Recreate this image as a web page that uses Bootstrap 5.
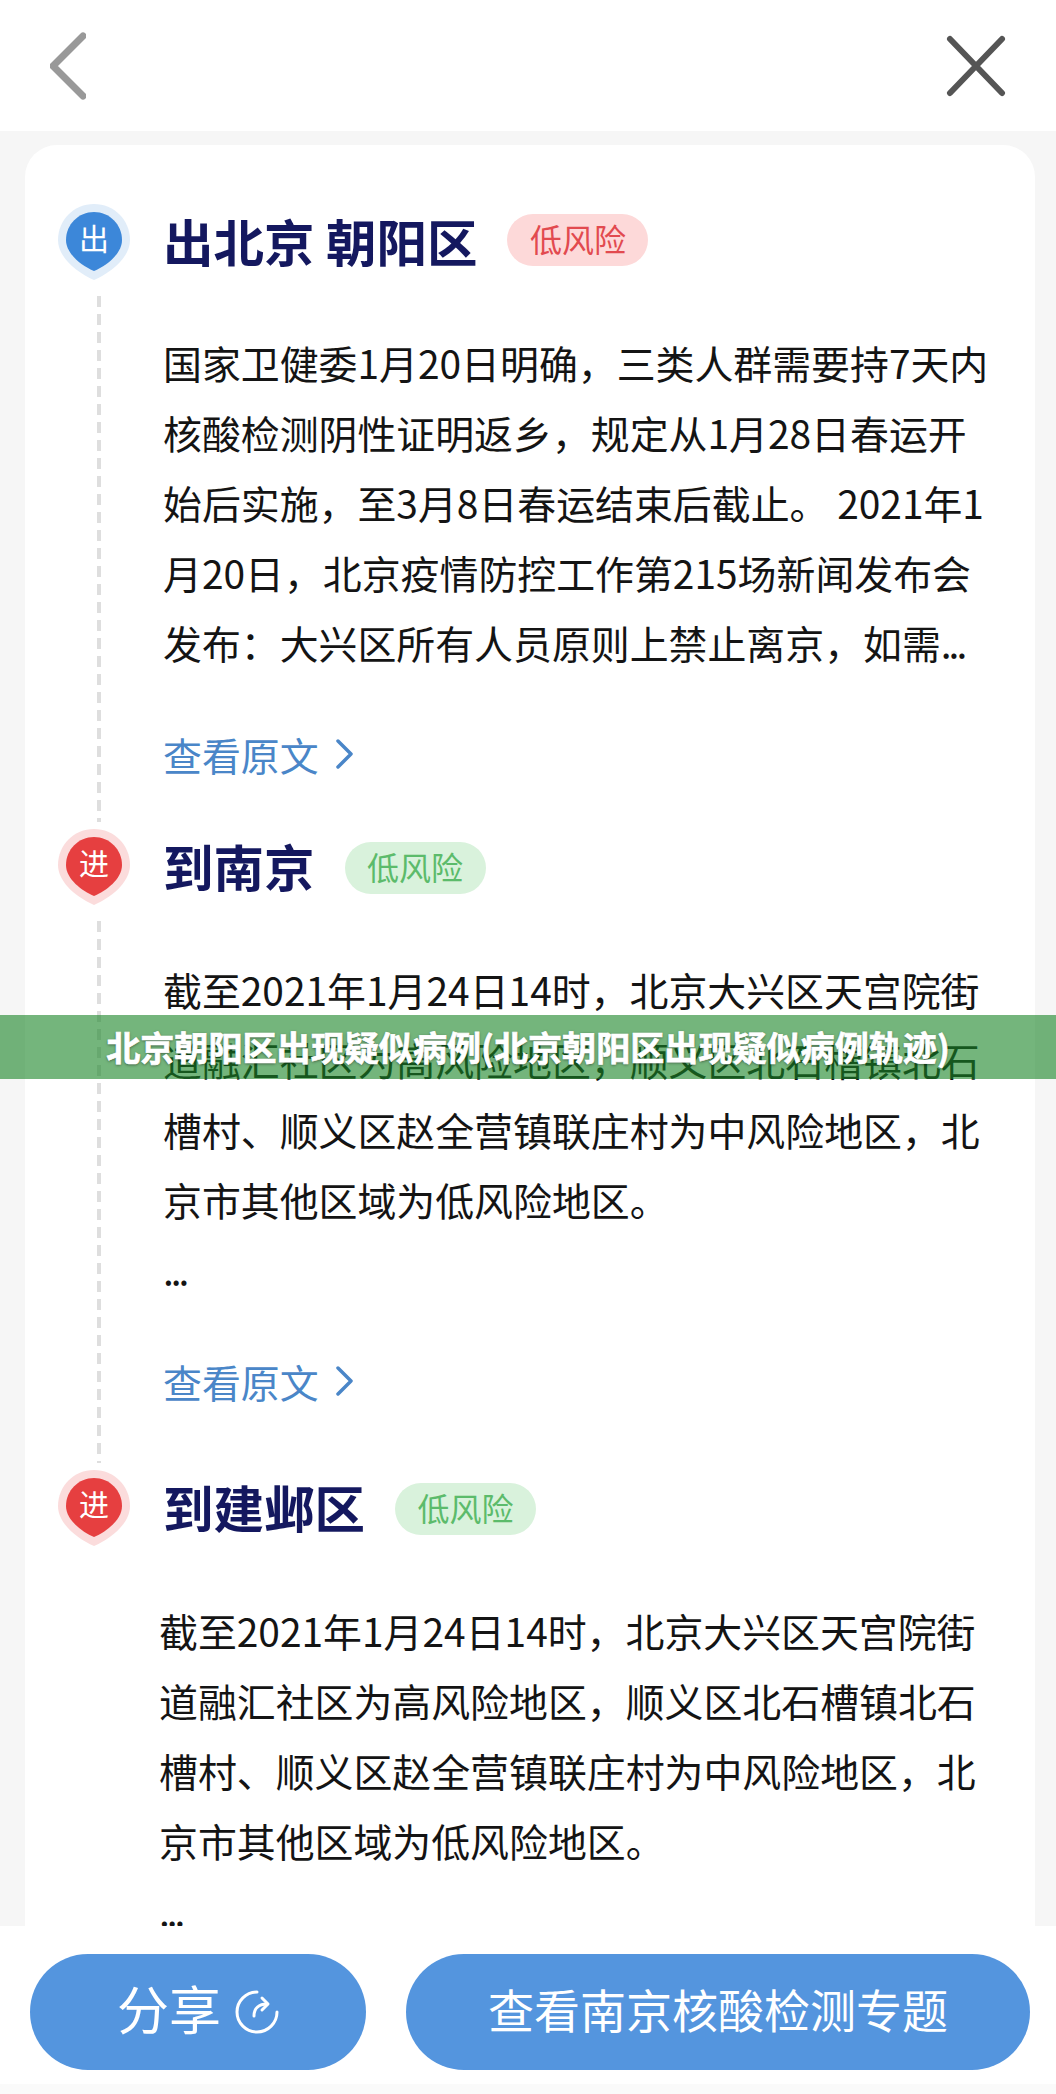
<!DOCTYPE html>
<html lang="zh-CN">
<head>
<meta charset="utf-8">
<title>北京朝阳区出现疑似病例</title>
<link href="https://cdn.jsdelivr.net/npm/bootstrap@5.3.0/dist/css/bootstrap.min.css" rel="stylesheet">
<style>
html,body{margin:0;background:#f6f6f6}
.app-shell{width:1056px;height:2094px;overflow:hidden;background:#f6f6f6;font-family:"Noto Sans CJK SC","Liberation Sans",sans-serif;color:#141414}
.top-bar{height:131px;flex:none;padding:0 50px 0 50px}
.main-area{flex:1 1 0;min-height:0;overflow:hidden;padding:14px 21px 0 25px}
.sheet{background:#fff;border-radius:32px 32px 0 0;padding:63px 33px 0 33px;height:100%}
.stop{display:flex}
.stop-one{height:625px}
.stop-two{height:641px}
.rail{width:72px;flex:none;margin-right:33px;display:flex;flex-direction:column}
.pin{display:block;width:72px;height:76px;margin-top:-4px;flex:none}
.pin text{font-size:30px;fill:#fff;text-anchor:middle;font-family:"Noto Sans CJK SC",sans-serif}
.dash{width:4px;flex:1 1 0;margin:16px 0 11px 39px;background:repeating-linear-gradient(to bottom,#dedede 0,#dedede 11px,transparent 11px,transparent 18px)}
.stop-text{min-width:0;white-space:nowrap;margin-top:-3px}
.head-row{height:70px;display:flex;align-items:center}
.place{font-size:50.500px;font-weight:700;line-height:70px;color:#14185f;margin:0}
.risk{height:52px;width:141px;border-radius:26px;font-size:32px;line-height:49px;text-align:center;margin-left:30px}
.risk-red{background:#fdd9d9;color:#e24a4f}
.risk-green{background:#d9f2dc;color:#5cbb6b;margin-top:6px}
.copy{font-size:38.900px;line-height:70px;margin:52px 0 0;color:#141414}
.copy-b{margin-top:54px}
.shift-text{margin-left:-4px}
.dots{letter-spacing:-3px}
.more{display:flex;align-items:center;gap:16px;font-size:38.900px;line-height:70px;color:#4a86c8;margin-top:42px;text-decoration:none}
.more svg{flex:none}
.notice{position:absolute;left:0;right:0;top:1015px;height:64px;background:rgba(23,132,37,.6);color:#fff;font-family:"Noto Sans CJK SC",sans-serif;font-weight:700;font-size:34.100px;line-height:62px;text-align:center;text-shadow:0 1px 3px rgba(0,0,0,.5);-webkit-text-stroke:.7px #fff;white-space:nowrap}
.bottom-bar{flex:none;height:168px;background:linear-gradient(to bottom,#fff 158px,#fafafa 158px);padding:28px 26px 0 30px;gap:40px}
.action{height:116px;border:0;border-radius:58px;background:#5495de;color:#fff;font-family:"Noto Sans CJK SC",sans-serif;display:flex;align-items:center;justify-content:center;padding:0 0 8px}
.action-share{width:336px;font-size:52px;gap:14px}
.action-share svg{margin-top:8px}
.action-topic{width:624px;font-size:46px}
</style>
</head>
<body>
<div class="app-shell position-relative d-flex flex-column">
  <header class="top-bar bg-white d-flex justify-content-between align-items-center">
    <svg width="36" height="68" viewBox="0 0 36 68" fill="none" stroke="#999" stroke-width="7" stroke-linecap="round" stroke-linejoin="round"><path d="M33 4 3 34l30 30"/></svg>
    <svg width="60" height="62" viewBox="0 0 60 62" fill="none" stroke="#555" stroke-width="6" stroke-linecap="round"><path d="M4 4l52 54M56 4 4 58"/></svg>
  </header>
  <main class="main-area">
    <div class="sheet">
      <section class="stop stop-one">
        <div class="rail">
          <svg class="pin" viewBox="0 0 72 76"><path fill="#e1edf9" d="M36 0C56 0 72 16 72 36C72 54 52 69 36 76C20 69 0 54 0 36C0 16 16 0 36 0Z"/><path fill="#3c87d9" d="M36 8C51.500 8 64 20.500 64 36C64 50 48 62 36 67C24 62 8 50 8 36C8 20.500 20.500 8 36 8Z"/><text x="36" y="46">出</text></svg>
          <div class="dash"></div>
        </div>
        <div class="stop-text">
          <div class="head-row"><h2 class="place">出北京 朝阳区</h2><span class="risk risk-red">低风险</span></div>
          <p class="copy">国家卫健委1月20日明确，三类人群需要持7天内<br>核酸检测阴性证明返乡，规定从1月28日春运开<br>始后实施，至3月8日春运结束后截止。 2021年1<br>月20日，北京疫情防控工作第215场新闻发布会<br>发布：大兴区所有人员原则上禁止离京，如需<span class="dots">...</span></p>
          <a class="more" href="#">查看原文<svg width="18" height="30" viewBox="0 0 18 30" fill="none" stroke="#4a86c8" stroke-width="3.500" stroke-linecap="round" stroke-linejoin="round"><path d="M3 2l13 13L3 28"/></svg></a>
        </div>
      </section>
      <section class="stop stop-two">
        <div class="rail">
          <svg class="pin" viewBox="0 0 72 76"><path fill="#fbdcdc" d="M36 0C56 0 72 16 72 36C72 54 52 69 36 76C20 69 0 54 0 36C0 16 16 0 36 0Z"/><path fill="#e63f40" d="M36 8C51.500 8 64 20.500 64 36C64 50 48 62 36 67C24 62 8 50 8 36C8 20.500 20.500 8 36 8Z"/><text x="36" y="46">进</text></svg>
          <div class="dash"></div>
        </div>
        <div class="stop-text">
          <div class="head-row"><h2 class="place">到南京</h2><span class="risk risk-green">低风险</span></div>
          <p class="copy copy-b">截至2021年1月24日14时，北京大兴区天宫院街<br>道融汇社区为高风险地区，顺义区北石槽镇北石<br>槽村、顺义区赵全营镇联庄村为中风险地区，北<br>京市其他区域为低风险地区。<br><span class="dots">...</span></p>
          <a class="more" href="#">查看原文<svg width="18" height="30" viewBox="0 0 18 30" fill="none" stroke="#4a86c8" stroke-width="3.500" stroke-linecap="round" stroke-linejoin="round"><path d="M3 2l13 13L3 28"/></svg></a>
        </div>
      </section>
      <section class="stop">
        <div class="rail">
          <svg class="pin" viewBox="0 0 72 76"><path fill="#fbdcdc" d="M36 0C56 0 72 16 72 36C72 54 52 69 36 76C20 69 0 54 0 36C0 16 16 0 36 0Z"/><path fill="#e63f40" d="M36 8C51.500 8 64 20.500 64 36C64 50 48 62 36 67C24 62 8 50 8 36C8 20.500 20.500 8 36 8Z"/><text x="36" y="46">进</text></svg>
        </div>
        <div class="stop-text">
          <div class="head-row"><h2 class="place">到建邺区</h2><span class="risk risk-green">低风险</span></div>
          <p class="copy copy-b shift-text">截至2021年1月24日14时，北京大兴区天宫院街<br>道融汇社区为高风险地区，顺义区北石槽镇北石<br>槽村、顺义区赵全营镇联庄村为中风险地区，北<br>京市其他区域为低风险地区。<br><span class="dots">...</span></p>
        </div>
      </section>
    </div>
  </main>
  <footer class="bottom-bar d-flex">
    <button type="button" class="btn action action-share">分享<svg width="44" height="44" viewBox="0 0 44 44" fill="none" stroke="#fff" stroke-width="3" stroke-linecap="round" stroke-linejoin="round"><path d="M22 2A20 20 0 1 0 42 22"/><path d="M19 26c0-8 5-12 13-12"/><path d="M27 8l6 6-6 6"/></svg></button>
    <button type="button" class="btn action action-topic">查看南京核酸检测专题</button>
  </footer>
  <div class="notice">北京朝阳区出现疑似病例(北京朝阳区出现疑似病例轨迹)</div>
</div>
<script src="https://cdn.jsdelivr.net/npm/bootstrap@5.3.0/dist/js/bootstrap.bundle.min.js"></script>
</body>
</html>
